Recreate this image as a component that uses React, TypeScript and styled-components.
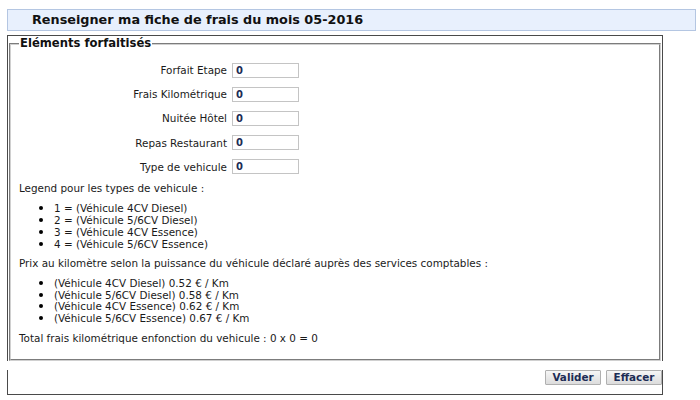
import React from 'react'
import styled, { createGlobalStyle } from 'styled-components'

const GlobalStyle = createGlobalStyle`
  html, body {
    margin: 0;
    padding: 0;
    background: #ffffff;
  }
  body {
    font-family: "DejaVu Sans", Verdana, sans-serif;
    font-size: 10.4px;
    color: #1a1a1a;
  }
`

const Page = styled.div`
  padding: 9px 4px 0 7px;
`

const TitleBar = styled.h2`
  margin: 0;
  width: 689px;
  box-sizing: border-box;
  height: 22px;
  line-height: 20px;
  padding-left: 24px;
  font-size: 12.8px;
  font-weight: bold;
  color: #111;
  background: #e8f0fd;
  border: 1px solid #b4c6e2;
`

const FormBody = styled.div`
  margin-top: 4px;
  width: 656px;
  box-sizing: border-box;
  border: 1px solid #4a4a4a;
  border-bottom: none;
  padding: 0 1px;
`

const Fieldset = styled.fieldset`
  margin: 0;
  padding: 0 8px 14px 8px;
  border: 2px groove #d0d0d0;
`

const Legend = styled.legend`
  padding: 0 1px;
  font-size: 11.6px;
  font-weight: bold;
  line-height: 15px;
  color: #111;
`

const Rows = styled.div`
  padding-top: 7px;
`

const Row = styled.div`
  display: flex;
  align-items: center;
  height: 24.2px;
`

const Label = styled.label`
  width: 208px;
  text-align: right;
  margin-right: 5px;
`

const Input = styled.input`
  box-sizing: border-box;
  width: 67px;
  height: 15px;
  padding: 0 3px;
  border: 1px solid #c4c4c4;
  font-family: "DejaVu Sans", Verdana, sans-serif;
  font-size: 10px;
  font-weight: bold;
  color: #1c2c55;
`

const Text = styled.p<{ $top: number }>`
  margin: ${(p) => p.$top}px 0 0 0;
  height: 14px;
  line-height: 14px;
`

const List = styled.ul<{ $top: number; $lh: number }>`
  margin: ${(p) => p.$top}px 0 0 0;
  padding-left: 35px;
  line-height: ${(p) => p.$lh}px;
  list-style: disc;

  li {
    height: ${(p) => p.$lh}px;
  }

  li::marker {
    font-size: 13px;
    color: #000;
  }
`

const Footer = styled.div`
  width: 656px;
  box-sizing: border-box;
  border: 1px solid #4a4a4a;
  border-top: none;
`

const Actions = styled.p`
  margin: 9px 0;
  display: flex;
  justify-content: flex-end;
  gap: 5px;
`

const Button = styled.button`
  box-sizing: border-box;
  width: 56px;
  height: 15px;
  padding: 0;
  font-family: "DejaVu Sans", Verdana, sans-serif;
  font-size: 10.4px;
  line-height: 13px;
  font-weight: bold;
  color: #1c2c55;
  background: linear-gradient(#f6f6f6, #dcdcdc);
  border: 1px solid #b0b0b0;
  border-radius: 1px;
`

const fields = ['Forfait Etape', 'Frais Kilométrique', 'Nuitée Hôtel', 'Repas Restaurant', 'Type de vehicule']

const types = [
  '1 = (Véhicule 4CV Diesel)',
  '2 = (Véhicule 5/6CV Diesel)',
  '3 = (Véhicule 4CV Essence)',
  '4 = (Véhicule 5/6CV Essence)',
]

const prices = [
  '(Véhicule 4CV Diesel) 0.52 € / Km',
  '(Véhicule 5/6CV Diesel) 0.58 € / Km',
  '(Véhicule 4CV Essence) 0.62 € / Km',
  '(Véhicule 5/6CV Essence) 0.67 € / Km',
]

const App = () => {
  return (
    <Page>
      <GlobalStyle />
      <TitleBar>Renseigner ma fiche de frais du mois 05-2016</TitleBar>
      <FormBody>
        <Fieldset>
          <Legend>Eléments forfaitisés</Legend>
          <Rows>
            {fields.map((f) => (
              <Row key={f}>
                <Label>{f}</Label>
                <Input type="text" defaultValue="0" />
              </Row>
            ))}
          </Rows>
          <Text $top={2}>Legend pour les types de vehicule :</Text>
          <List $top={7} $lh={12}>
            {types.map((t) => (
              <li key={t}>{t}</li>
            ))}
          </List>
          <Text $top={6}>Prix au kilomètre selon la puissance du véhicule déclaré auprès des services comptables :</Text>
          <List $top={7} $lh={11.7}>
            {prices.map((t) => (
              <li key={t}>{t}</li>
            ))}
          </List>
          <Text $top={7}>Total frais kilométrique enfonction du vehicule : 0 x 0 = 0</Text>
        </Fieldset>
      </FormBody>
      <Footer>
        <Actions>
          <Button type="submit">Valider</Button>
          <Button type="reset">Effacer</Button>
        </Actions>
      </Footer>
    </Page>
  )
}

export default App
